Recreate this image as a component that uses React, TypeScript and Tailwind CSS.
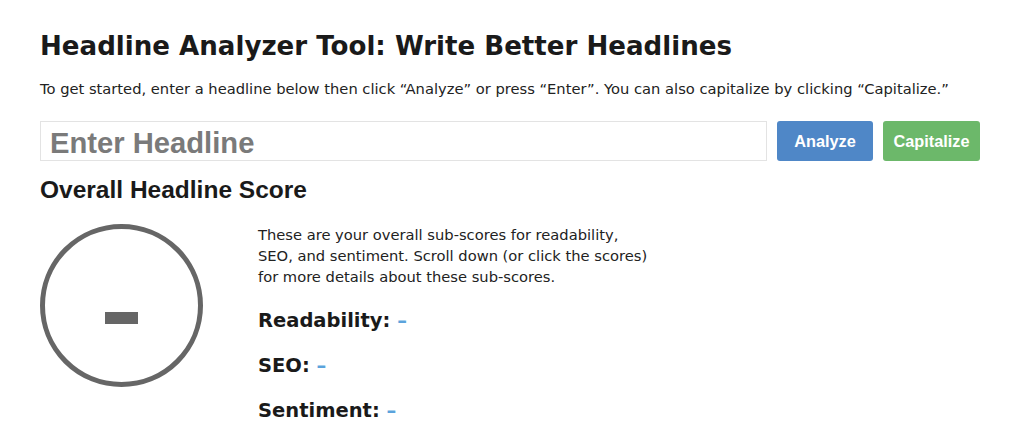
import React from "react";

export default function App() {
  const verdana = { fontFamily: '"DejaVu Sans", Verdana, sans-serif' };
  const arial = { fontFamily: '"Liberation Sans", Arial, sans-serif' };
  return (
    <div className="min-h-[435px] bg-white text-[#1a1a1a]">
      <div className="pl-[40px] pr-[44px] pt-[29px]">
        <h1 className="text-[26.1px] font-bold leading-[34px] text-[#1a1a1a]" style={verdana}>
          Headline Analyzer Tool: Write Better Headlines
        </h1>
        <p className="mt-[17px] text-[14.7px] leading-[18px] text-[#222]" style={verdana}>
          To get started, enter a headline below then click “Analyze” or press “Enter”. You can also capitalize by clicking “Capitalize.”
        </p>
        <div className="mt-[23px] flex gap-[10px]">
          <input
            className="h-[40px] w-[727px] border border-[#e3e3e3] pl-[9px] pr-[9px] pt-[6px] pb-0 text-[29.2px] font-bold text-[#444] placeholder:text-[#7a7a7a] outline-none"
            style={arial}
            placeholder="Enter Headline"
          />
          <button className="h-[40px] w-[96px] rounded-[3px] bg-[#4f87c7] text-[16.3px] font-bold text-white" style={arial}>
            Analyze
          </button>
          <button className="h-[40px] w-[97px] rounded-[3px] bg-[#6cb86a] text-[16.3px] font-bold text-white" style={arial}>
            Capitalize
          </button>
        </div>
        <h2 className="mt-[15px] text-[24.5px] font-bold leading-[28px] text-[#1a1a1a]" style={arial}>
          Overall Headline Score
        </h2>
        <div className="mt-[20px] flex">
          <div className="flex h-[163px] w-[163px] shrink-0 items-center justify-center rounded-full border-[5px] border-[#666]">
            <div className="mt-[24px] h-[12px] w-[33px] bg-[#666]" />
          </div>
          <div className="ml-[55px] mt-[0px]">
            <p className="text-[14.7px] leading-[21px] text-[#222]" style={verdana}>
              These are your overall sub-scores for readability,
              <br />
              SEO, and sentiment. Scroll down (or click the scores)
              <br />
              for more details about these sub-scores.
            </p>
            <div className="mt-[21px] flex flex-col gap-[20px]" style={verdana}>
              <div className="text-[19.5px] font-bold leading-[25px] text-[#1a1a1a]">
                Readability: <span className="text-[#5ba3dc]">–</span>
              </div>
              <div className="text-[19.5px] font-bold leading-[25px] text-[#1a1a1a]">
                SEO: <span className="text-[#5ba3dc]">–</span>
              </div>
              <div className="text-[19.5px] font-bold leading-[25px] text-[#1a1a1a]">
                Sentiment: <span className="text-[#5ba3dc]">–</span>
              </div>
            </div>
          </div>
        </div>
      </div>
    </div>
  );
}
